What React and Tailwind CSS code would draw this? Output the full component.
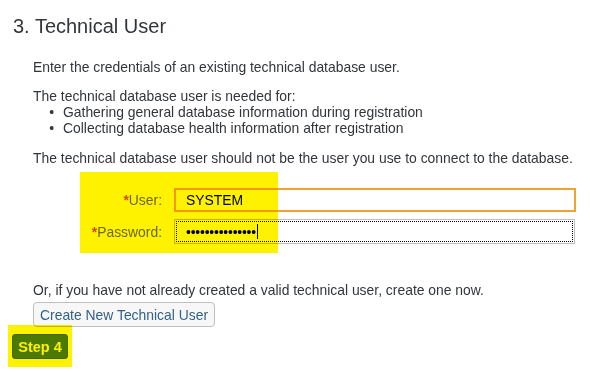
export default function App() {
  return (
    <div className="relative w-[590px] h-[373px] overflow-hidden bg-white font-['Liberation_Sans',Arial,sans-serif] text-[13.9px] leading-[16px] text-[#32363a]">
      {/* Heading */}
      <h1 className="pl-[13px] pt-[13px] text-[20px] leading-[26px]">3. Technical User</h1>

      <div className="pl-[33px]">
        <p className="mt-[20px]">Enter the credentials of an existing technical database user.</p>

        <p className="mt-[13px]">The technical database user is needed for:</p>
        <ul>
          <li className="flex">
            <span className="w-[30px] text-right pr-[9px]">•</span>
            <span>Gathering general database information during registration</span>
          </li>
          <li className="flex">
            <span className="w-[30px] text-right pr-[9px]">•</span>
            <span>Collecting database health information after registration</span>
          </li>
        </ul>

        <p className="mt-[14px]">
          The technical database user should not be the user you use to connect to the database.
        </p>

        {/* Form */}
        <div className="mt-[22px] flex flex-col gap-[7px]">
          <div className="flex items-center">
            <label className="w-[129px] text-right text-[#6a6d70]">
              <span className="text-[#d24a00] font-bold">*</span>User:
            </label>
            <div className="ml-[12px] w-[402px] h-[24px] border-2 border-[#f2a233] bg-white flex items-center pl-[10px] text-black">
              SYSTEM
            </div>
          </div>
          <div className="flex items-center">
            <label className="w-[129px] text-right text-[#6a6d70]">
              <span className="text-[#d24a00] font-bold">*</span>Password:
            </label>
            <div className="ml-[12px] w-[401px] h-[25px] border border-[#c0c0c0] bg-white p-[1px]">
              <div className="h-full border border-dotted border-black flex items-center pl-[9px] text-black">
                <span className="tracking-[-0.2px]">•••••••••••••••</span>
                <span className="ml-[1px] w-[1px] h-[15px] bg-black" />
              </div>
            </div>
          </div>
        </div>

        <p className="mt-[38px]">Or, if you have not already created a valid technical user, create one now.</p>
        <button className="mt-[4px] h-[25px] px-[6px] rounded-[4px] border border-[#bfbfbf] bg-[#f7f7f7] text-[#346187]">
          Create New Technical User
        </button>
      </div>

      <button className="ml-[12px] mt-[7px] block w-[56px] h-[25px] rounded-[3px] bg-[#4c8000] text-white text-[14.5px] font-bold border border-[#3f6e00]">
        Step 4
      </button>

      {/* yellow highlight overlays */}
      <div className="absolute left-[80px] top-[172px] w-[198px] h-[81px] bg-[#fff200] mix-blend-multiply pointer-events-none" />
      <div className="absolute left-[8px] top-[325px] w-[64px] h-[42px] bg-[#fff200] mix-blend-multiply pointer-events-none" />
    </div>
  );
}
